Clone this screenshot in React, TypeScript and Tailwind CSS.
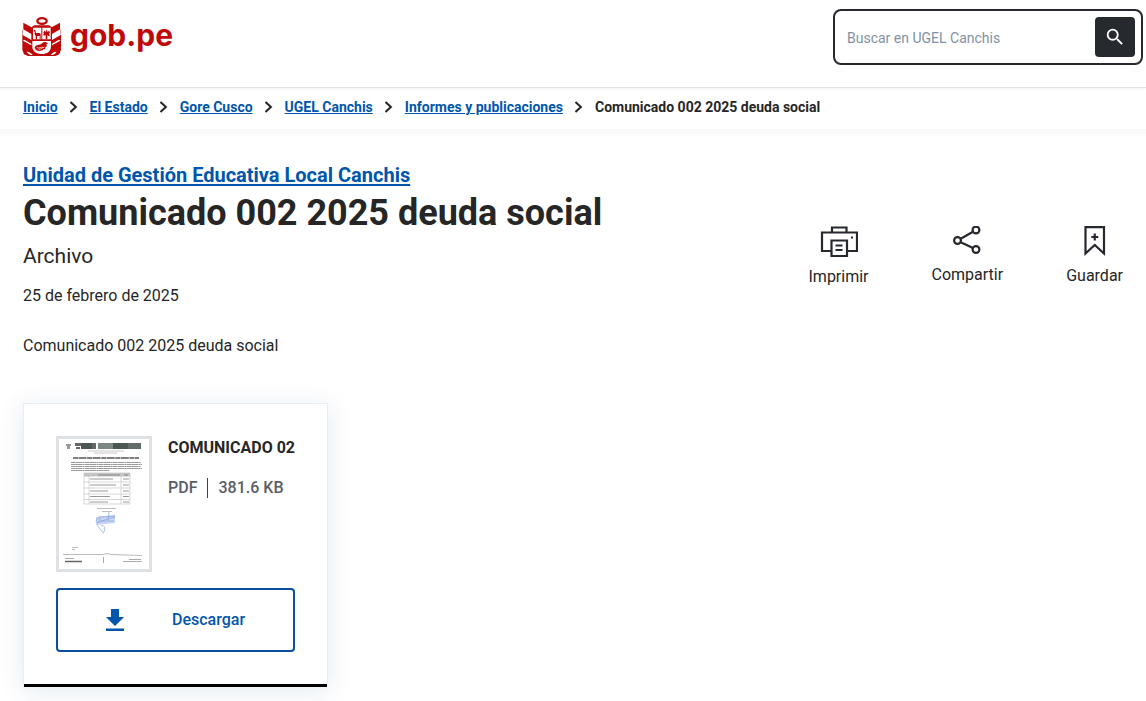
import React from "react";

const crumbs = ["Inicio", "El Estado", "Gore Cusco", "UGEL Canchis", "Informes y publicaciones"];

function Crest() {
  return (
    <svg viewBox="0 0 120 120" className="h-10 w-10" aria-hidden="true">
      <ellipse cx="60" cy="12" rx="14" ry="8.500" fill="none" stroke="#bf0909" strokeWidth="7" />
      <g fill="#bf0909">
        <path d="M4 17 29 31 36 25h46l7 6 25-14v20l3 3v58l-5 14-12 5H18l-12-5-5-14V40l3-3z" />
      </g>
      <g fill="#fff">
        <path d="M2 36 28 51v18L2 54zM116 36 90 51v18l26-15z" />
        <path d="M7 68 28 80v5L3 71zM111 68 90 80v5l25-14z" />
        <path d="M33 32h25v35H33zM61 32h25v35H61z" />
        <path d="M31 72h56v17c0 14-13 22-28 22S31 103 31 89z" />
        <path d="M14 104c8 0 14 4 18 10-8 0-14-3-18-10zM104 104c-8 0-14 4-18 10 8 0 14-3 18-10z" />
      </g>
      <g fill="#bf0909">
        <path d="M36 38l4 2 2 8h11l3 3v16h-3V57h-8v10h-4V57l-3-5v-8l-3-2z" />
        <path d="M71 48h5v19h-5zM64 46l4-5 3 4 3-7 3 7 4-4 3 5-3 4 3 6-5 1-3-3-3 3-3-3-3 2-4-2 3-4z" />
        <path d="M38 92c4-11 15-6 22-13 5-5 13-5 18 1l-6 1c5 4 2 9-3 10 3 3 0 7-4 6-8 8-24 6-27-5z" />
      </g>
      <path d="M44 92c7 3 13-2 20-1M50 97c6 1 11-5 17-7" fill="none" stroke="#fff" strokeWidth="2" />
    </svg>
  );
}

function Chevron() {
  return (
    <svg viewBox="0 0 8 12" className="h-3 w-2" fill="none" stroke="#262626" strokeWidth="2" aria-hidden="true">
      <path d="M.5 1l5.400 5L.5 11" />
    </svg>
  );
}

function PrintIcon() {
  return (
    <svg viewBox="0 0 38 31" className="h-[31px] w-[38px]" fill="none" stroke="#26282f" strokeWidth="2.200" aria-hidden="true">
      <path d="M12 6V1.500h14.500V6M11 25H2V6.500h35V25H27" />
      <path d="M11.500 14.500h15.500V30H11.500zM15.500 19.500h7M15.500 24h7" />
      <path d="M31 11.500h2" />
    </svg>
  );
}

function ShareIcon() {
  return (
    <svg viewBox="0 0 28 29" className="h-[29px] w-7" fill="none" stroke="#26282f" strokeWidth="2.200" aria-hidden="true">
      <circle cx="4.500" cy="14.500" r="3.400" />
      <circle cx="23" cy="4" r="3.400" />
      <circle cx="23" cy="23.500" r="3.400" />
      <path d="M7.700 12.800 20 5.800M7.700 16.200 20 22" />
    </svg>
  );
}

function SaveIcon() {
  return (
    <svg viewBox="0 0 22 30" className="h-[30px] w-[22px]" fill="none" stroke="#26282f" strokeWidth="2.200" aria-hidden="true">
      <path d="M1.500 1.100h18.500v26.400l-9.250-8.500-9.250 8.500zM10.750 7.500v7M7.250 11h7" />
    </svg>
  );
}

const actions = [
  { label: "Imprimir", Icon: PrintIcon },
  { label: "Compartir", Icon: ShareIcon },
  { label: "Guardar", Icon: SaveIcon },
];

function Thumbnail() {
  return (
    <svg viewBox="0 0 90 130" className="block h-full w-full" role="img" aria-label="COMUNICADO 02">
      <path fill="#fff" d="M0 0h90v130H0z" />
      <path fill="#999" d="M7 5h5v2H7zM8 7h3v3H8z" />
      <path fill="#666" d="M16 4h6v3h-6zM17 8h4v2h-4zM33 4h4v6h-4z" />
      <path fill="#4b5655" d="M22 4h11v6H22zM54 4h15v6H54z" />
      <path fill="#7d8885" d="M39 4h15v6H39z" />
      <path fill="#626b68" d="M69 4h13v6H69z" />
      <path stroke="#bbb" strokeWidth=".8" d="M29 12h36M35 14h23" />
      <path stroke="#555" strokeWidth="1.500" strokeDasharray="5 .5 8 .6" d="M14 19h66" />
      <g stroke="#999" strokeWidth="1" strokeDasharray="4 .3 7 .3 2 .4">
        <path d="M12 23.500h70M12 25.500h71M12 27.500h70M12 29.500h71" />
        <path d="M12 31.500h38" />
      </g>
      <path fill="#c4c4c4" d="M25 34h46v3.500H25z" />
      <path stroke="#888" strokeWidth="1" strokeDasharray="22 4" d="M39 36h30" />
      <path fill="none" stroke="#c6c6c6" strokeWidth=".7" d="M25 34h46v31H25zM30 34v31M62 34v31M25 43h46M25 49h46M25 55h46M25 60.500h46" />
      <g stroke="#999" strokeWidth="1">
        <path d="M31 40h23M31 46h26M31 52h18M31 57.500h20M31 63h18" />
        <path d="M64 40h6M64 46h6M64 52h6M64 57.500h6M64 63h6" />
      </g>
      <path stroke="#aaa" strokeWidth=".8" d="M38 69.500h19M43 72.500h10" />
      <path fill="#c6d5f2" d="M37 78l19-2v8l-19 2z" />
      <path fill="none" stroke="#86a3dc" strokeWidth=".7" d="M50 73l-1 8M37 83c2-9 7-2 1 1l10-4 8-2M41 82h14M38 86l6 8c3-3 2-9-2-7M40 78l16-1" />
      <path stroke="#aaa" strokeWidth=".8" fill="none" d="M13 108.500h6M13 110.500h3M4 115.500h40l4-1 4 1 31 1" />
      <path stroke="#666" strokeWidth="1.500" d="M6 122.500h17" />
      <path stroke="#aaa" strokeWidth="1" d="M6 119.500h9M44.500 118v6M64 122.500h19M70 120.500h12" />
    </svg>
  );
}

export default function App() {
  return (
    <div className="bg-white font-['Roboto',sans-serif] text-base leading-6 text-[#262626]">
      <header className="flex items-start justify-between border-b border-[#e3e4e6] pt-[9px] pr-[3px] pb-[22px] pl-[22px] shadow-[0_1px_2px_rgba(0,0,0,0.05)]">
        <a href="#" className="flex items-start gap-2 pt-2" aria-label="gob.pe">
          <Crest />
          <span className="font-['Inter',sans-serif] text-[30px] leading-9 font-bold text-[#bf0909]">gob.pe</span>
        </a>
        <form role="search" className="flex h-14 w-[310px] items-center rounded-lg border-2 border-[#26292e] pr-1.5 pl-3">
          <input
            type="search"
            aria-label="Buscar en UGEL Canchis"
            placeholder="Buscar en UGEL Canchis"
            className="min-w-0 flex-1 pt-0.5 text-sm outline-none placeholder:text-[#8292a2]"
          />
          <button type="button" aria-label="Buscar" className="flex size-10 items-center justify-center rounded bg-[#26292e]">
            <svg viewBox="0 0 24 24" className="size-[22px]" fill="#fff" aria-hidden="true">
              <path d="M15.500 14h-.79l-.28-.27A6.470 6.470 0 0 0 16 9.500 6.500 6.500 0 1 0 9.500 16c1.610 0 3.090-.59 4.230-1.570l.27.28v.79l5 4.990L20.490 19l-4.990-5zm-6 0a4.500 4.500 0 1 1 0-9 4.500 4.500 0 0 1 0 9z" />
            </svg>
          </button>
        </form>
      </header>

      <nav aria-label="Ruta de navegación" className="px-[23px] pt-[9px] pb-3">
        <ol className="flex flex-wrap items-center gap-x-3 text-sm leading-5 font-bold">
          {crumbs.map((c) => (
            <li key={c} className="flex items-center gap-3">
              <a href="#" className="text-[#0056ac] underline">{c}</a>
              <Chevron />
            </li>
          ))}
          <li aria-current="page">Comunicado 002 2025 deuda social</li>
        </ol>
      </nav>
      <div className="h-2 bg-linear-to-b from-[#f7f7f7] to-white" />

      <main className="px-[23px] pt-6 pb-4">
        <div className="flex items-start justify-between">
          <div>
            <a href="#" className="block text-xl leading-7 font-bold text-[#0056ac] underline underline-offset-2">
              Unidad de Gestión Educativa Local Canchis
            </a>
            <h1 className="text-4xl leading-12 font-bold">Comunicado 002 2025 deuda social</h1>
            <p className="text-[21px] leading-[39px]">Archivo</p>
            <p className="leading-10">25 de febrero de 2025</p>
          </div>
          <div className="flex items-start gap-[63px] pt-[65px]">
            {actions.map(({ label, Icon }) => (
              <button key={label} type="button" className="flex flex-col items-center gap-2">
                <Icon />
                <span>{label}</span>
              </button>
            ))}
          </div>
        </div>
        <p className="mt-4 leading-7">Comunicado 002 2025 deuda social</p>

        <article className="mt-[43px] w-[305px] border border-b-0 border-[#e9eef6] shadow-[0_4px_24px_rgba(20,70,140,0.12)]">
          <div className="border-b-[3px] border-black p-8">
            <div className="flex gap-4">
              <div className="h-[136px] w-24 shrink-0 border-[3px] border-[#dee2e6]">
                <Thumbnail />
              </div>
              <div>
                <h2 className="font-bold whitespace-nowrap">COMUNICADO 02</h2>
                <p className="mt-4 flex items-center font-medium text-[#5a5d66]">
                  <span className="pr-2.5">PDF</span>
                  <span className="h-5 border-l border-[#0a4f8c] pl-2.5 leading-5">381.6 KB</span>
                </p>
              </div>
            </div>
            <button type="button" className="mt-4 flex h-16 w-full items-center justify-center gap-12 rounded border-2 border-[#0a4f9e] font-medium text-[#0056ac]">
              <svg viewBox="0 0 18 22" className="h-[22px] w-[18px]" fill="#0056ac" aria-hidden="true">
                <path d="M5 0h8v8h5l-9 9-9-9h5zM0 19.500h18V22H0z" />
              </svg>
              <span>Descargar</span>
            </button>
          </div>
        </article>
      </main>
    </div>
  );
}
